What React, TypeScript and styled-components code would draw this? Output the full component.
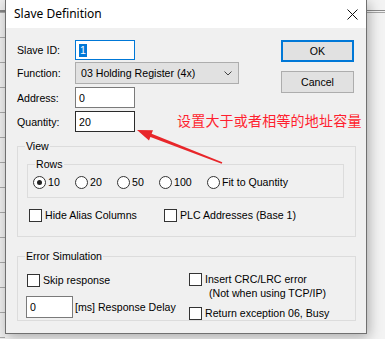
import styled, { createGlobalStyle, css } from 'styled-components'

const GlobalStyle = createGlobalStyle`
  html, body {
    margin: 0;
    padding: 0;
  }
  body {
    background: #f0f0f0;
    font-family: "Liberation Sans", Arial, sans-serif;
    font-size: 10.6px;
    color: #000;
  }
`

const Desktop = styled.div`
  position: relative;
  display: flex;
  width: 385px;
  height: 339px;
  overflow: hidden;
  background: #f2f2f2;
`

const BackLeft = styled.div`
  flex: none;
  width: 5px;
  background:
    linear-gradient(#858585, #858585) 0 10px / 100% 2px no-repeat,
    repeating-linear-gradient(to bottom, #a9a9a9 0 1px, transparent 1px 25px) 0 12px / 100% 100% no-repeat,
    #eeeeee;
`

const BackRight = styled.div`
  flex: 1;
  background:
    linear-gradient(#8a8a8a, #8a8a8a) 0 10px / 100% 1px no-repeat,
    linear-gradient(#a5a5a5, #a5a5a5) 0 12px / 100% 1px no-repeat,
    #f3f3f3;
`

const Dialog = styled.div`
  position: relative;
  z-index: 1;
  flex: none;
  display: flex;
  flex-direction: column;
  box-sizing: border-box;
  width: 362px;
  height: 334px;
  border: 1px solid #707070;
  border-top: none;
  background: #f0f0f0;
  box-shadow: 2px 3px 12px rgba(0, 0, 0, 0.3);
`

const TitleBar = styled.div`
  display: flex;
  align-items: center;
  justify-content: space-between;
  height: 28px;
  padding: 0 8px;
  background: #fff;
`

const Title = styled.span`
  font-family: "Noto Sans", "Liberation Sans", sans-serif;
  font-size: 12px;
  padding-bottom: 2px;
`

const Body = styled.div`
  flex: 1;
  padding: 12px 10px 0 11px;
`

const TopSection = styled.div`
  display: flex;
  justify-content: space-between;
`

const Form = styled.div`
  display: flex;
  flex-direction: column;
`

const FieldRow = styled.div<{ $mt?: number }>`
  display: flex;
  align-items: center;
  margin-top: ${(p) => p.$mt ?? 0}px;
`

const FieldLabel = styled.span`
  width: 58px;
`

const TextBox = styled.div<{ $h?: number; $border?: string; $w?: number }>`
  box-sizing: border-box;
  width: ${(p) => p.$w ?? 60}px;
  height: ${(p) => p.$h ?? 21}px;
  display: flex;
  align-items: center;
  padding-left: 3px;
  background: #fff;
  border: 1px solid ${(p) => p.$border ?? '#7a7a7a'};
`

const Selected = styled.span`
  background: #0078d7;
  color: #fff;
  line-height: 13px;
  padding: 0 1px;
`

const SelectBox = styled.div`
  box-sizing: border-box;
  width: 164px;
  height: 22px;
  display: flex;
  align-items: center;
  justify-content: space-between;
  padding: 0 6px 0 5px;
  background: #e1e1e1;
  border: 1px solid #adadad;
`

const ButtonColumn = styled.div`
  display: flex;
  flex-direction: column;
  gap: 9px;
  margin-right: 2px;
`

const Button = styled.div<{ $default?: boolean }>`
  box-sizing: border-box;
  width: 73px;
  height: 22px;
  display: flex;
  align-items: center;
  justify-content: center;
  background: #e1e1e1;
  border: 1px solid #adadad;
  ${(p) =>
    p.$default &&
    css`
      border: 2px solid #0078d7;
    `}
`

const GroupBox = styled.div<{ $h: number; $mt: number }>`
  position: relative;
  box-sizing: border-box;
  height: ${(p) => p.$h}px;
  margin-top: ${(p) => p.$mt}px;
  border: 1px solid #dcdcdc;
`

const Caption = styled.span`
  position: absolute;
  top: -7px;
  left: 7px;
  padding: 0 1px;
  line-height: 13px;
  background: #f0f0f0;
`

const RowsBox = styled(GroupBox)`
  margin-left: 9px;
  margin-right: 11px;
  padding: 10px 0 0 5px;
`

const RadioRow = styled.div`
  display: grid;
  grid-template-columns: 42px 42px 42px 48px auto;
`

const Choice = styled.label<{ $gap?: number }>`
  display: inline-flex;
  align-items: center;
  gap: ${(p) => p.$gap ?? 2}px;
  line-height: 14px;
  white-space: nowrap;
`

const Radio = styled.span<{ $checked?: boolean }>`
  position: relative;
  flex: none;
  box-sizing: border-box;
  width: 13px;
  height: 13px;
  border-radius: 50%;
  border: 1px solid #333;
  background: #fff;
  ${(p) =>
    p.$checked &&
    css`
      &::after {
        content: '';
        position: absolute;
        left: 3px;
        top: 3px;
        width: 5px;
        height: 5px;
        border-radius: 50%;
        background: #222;
      }
    `}
`

const CheckBox = styled.span`
  flex: none;
  box-sizing: border-box;
  width: 13px;
  height: 13px;
  border: 1px solid #333;
  background: #fff;
`

const CheckRow = styled.div`
  display: grid;
  grid-template-columns: 135px auto;
  margin-top: 10px;
  padding-left: 11px;
`

const ErrorGrid = styled.div`
  display: grid;
  grid-template-columns: 171px auto;
  padding-top: 15px;
`

const ErrorLeft = styled.div`
  display: flex;
  flex-direction: column;
  align-items: flex-start;
  padding-left: 8px;
`

const ErrorRight = styled.div`
  display: flex;
  flex-direction: column;
  align-items: flex-start;
`

const MultiChoice = styled.div`
  display: flex;
  align-items: flex-start;
  gap: 3px;
  line-height: 14px;
  & > span:first-child {
    margin-top: 1px;
  }
`

const Indent = styled.div`
  padding-left: 4px;
`

const DelayRow = styled.div`
  display: flex;
  align-items: center;
  gap: 2px;
  margin-top: 9px;
`

const Annotation = styled.span`
  position: absolute;
  z-index: 2;
  left: 177px;
  top: 111px;
  font-family: "Noto Sans CJK SC", "Noto Sans", sans-serif;
  font-size: 14px;
  line-height: 19px;
  letter-spacing: 0.2px;
  color: #ff1f2f;
`

const Overlay = styled.svg`
  position: absolute;
  z-index: 2;
  left: 0;
  top: 0;
  pointer-events: none;
`

export default function App() {
  return (
    <>
      <GlobalStyle />
      <Desktop>
        <BackLeft />
        <Dialog>
          <TitleBar>
            <Title>Slave Definition</Title>
            <svg width="11" height="11" viewBox="0 0 11 11">
              <path d="M0.5 0.5 L10.5 10.5 M10.5 0.5 L0.5 10.5" stroke="#111" strokeWidth="1" />
            </svg>
          </TitleBar>
          <Body>
            <TopSection>
              <Form>
                <FieldRow>
                  <FieldLabel>Slave ID:</FieldLabel>
                  <TextBox $h={20} $border="#0078d7">
                    <Selected>1</Selected>
                  </TextBox>
                </FieldRow>
                <FieldRow $mt={2}>
                  <FieldLabel>Function:</FieldLabel>
                  <SelectBox>
                    <span>03 Holding Register (4x)</span>
                    <svg width="8" height="5" viewBox="0 0 8 5">
                      <path d="M0.5 0.5 L4 4 L7.5 0.5" fill="none" stroke="#444" strokeWidth="1" />
                    </svg>
                  </SelectBox>
                </FieldRow>
                <FieldRow $mt={3}>
                  <FieldLabel>Address:</FieldLabel>
                  <TextBox>0</TextBox>
                </FieldRow>
                <FieldRow $mt={3}>
                  <FieldLabel>Quantity:</FieldLabel>
                  <TextBox $border="#2b2b2b">20</TextBox>
                </FieldRow>
              </Form>
              <ButtonColumn>
                <Button $default>OK</Button>
                <Button>Cancel</Button>
              </ButtonColumn>
            </TopSection>

            <GroupBox $h={91} $mt={14}>
              <Caption>View</Caption>
              <RowsBox $h={34} $mt={17}>
                <Caption>Rows</Caption>
                <RadioRow>
                  <Choice>
                    <Radio $checked />
                    10
                  </Choice>
                  <Choice>
                    <Radio />
                    20
                  </Choice>
                  <Choice>
                    <Radio />
                    50
                  </Choice>
                  <Choice>
                    <Radio />
                    100
                  </Choice>
                  <Choice>
                    <Radio />
                    Fit to Quantity
                  </Choice>
                </RadioRow>
              </RowsBox>
              <CheckRow>
                <Choice $gap={3}>
                  <CheckBox />
                  Hide Alias Columns
                </Choice>
                <Choice $gap={3}>
                  <CheckBox />
                  PLC Addresses (Base 1)
                </Choice>
              </CheckRow>
            </GroupBox>

            <GroupBox $h={65} $mt={19}>
              <Caption>Error Simulation</Caption>
              <ErrorGrid>
                <ErrorLeft>
                  <Choice $gap={3} style={{ marginTop: 1, marginLeft: 1 }}>
                    <CheckBox />
                    Skip response
                  </Choice>
                  <DelayRow>
                    <TextBox $w={47} $h={22}>0</TextBox>
                    <span>[ms] Response Delay</span>
                  </DelayRow>
                </ErrorLeft>
                <ErrorRight>
                  <MultiChoice>
                    <CheckBox />
                    <div>
                      <div>Insert CRC/LRC error</div>
                      <Indent>(Not when using TCP/IP)</Indent>
                    </div>
                  </MultiChoice>
                  <Choice $gap={3} style={{ marginTop: 6 }}>
                    <CheckBox />
                    Return exception 06, Busy
                  </Choice>
                </ErrorRight>
              </ErrorGrid>
            </GroupBox>
          </Body>
        </Dialog>
        <BackRight />
        <Annotation>设置大于或者相等的地址容量</Annotation>
        <Overlay width="385" height="339" viewBox="0 0 385 339">
          <polygon
            points="137,130 153,130.3 151.6,133.8 222.3,162.3 221.7,163.7 150.4,137 149,140.5"
            fill="#e8262a"
          />
        </Overlay>
      </Desktop>
    </>
  )
}
